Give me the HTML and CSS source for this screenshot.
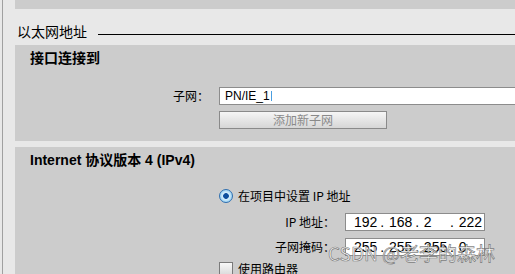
FILE: index.html
```html
<!DOCTYPE html>
<html lang="zh-CN">
<head>
  <meta charset="UTF-8" />
  <title>以太网地址</title>
  <link rel="stylesheet" href="styles.css">
</head>
<body>
  <div class="screen">
    <div class="rail"></div>
    <div class="content">
      <div class="strip"></div>
      <div class="sec-head">
        <span class="sec-title">以太网地址</span>
        <span class="sec-rule"></span>
      </div>

      <section class="panel panel-iface">
        <h2 class="panel-title">接口连接到</h2>
        <div class="row">
          <label class="lbl">子网：</label>
          <div class="field field-wide">PN/IE_1<span class="caret"></span></div>
        </div>
        <div class="btn-row">
          <button class="btn" disabled>添加新子网</button>
        </div>
      </section>

      <section class="panel panel-ip">
        <h2 class="panel-title">Internet 协议版本 4 (IPv4)</h2>
        <div class="opts">
          <div class="opt"><span class="radio"></span>在项目中设置 IP 地址</div>
          <div class="row row-ip">
            <label class="lbl">IP 地址：</label>
            <div class="field ip">
              <span class="oct">192</span><span class="dot">.</span>
              <span class="oct">168</span><span class="dot">.</span>
              <span class="oct">2</span><span class="dot">.</span>
              <span class="oct">222</span>
            </div>
          </div>
          <div class="row row-mask">
            <label class="lbl">子网掩码：</label>
            <div class="field ip">
              <span class="oct">255</span><span class="dot">.</span>
              <span class="oct">255</span><span class="dot">.</span>
              <span class="oct">255</span><span class="dot">.</span>
              <span class="oct">0</span>
            </div>
          </div>
          <div class="opt opt-check"><span class="check"></span>使用路由器</div>
        </div>
      </section>
    </div>
    <div class="watermark">CSDN @老李的森林</div>
  </div>
</body>
</html>
```

FILE: styles.css
```css
body {
  margin: 0;
  padding: 0;
  background: #e8e8e8;
  font-family: "Liberation Sans", "Noto Sans CJK SC", sans-serif;
  color: #000;
}
.screen {
  position: relative;
  width: 515px;
  height: 274px;
  overflow: hidden;
  display: flex;
}
.rail {
  width: 12px;
  margin-left: 2px;
  border-left: 1px solid #a0a0a0;
  flex: none;
}
.content {
  flex: 1;
  min-width: 0;
}
.strip {
  height: 9px;
  background: #cccccc;
}
.sec-head {
  height: 36px;
  display: flex;
  padding-left: 2px;
}
.sec-title {
  font-family: "Noto Sans CJK SC", sans-serif;
  font-size: 14px;
  line-height: 16px;
  margin-top: 14px;
  white-space: nowrap;
}
.sec-rule {
  flex: 1;
  height: 25px;
  margin-left: 11px;
  border-bottom: 1px solid #000;
}
.panel {
  background: #cccccc;
  padding: 3px 0 0 15px;
}
.panel-iface {
  height: 93px;
  margin-bottom: 6px;
}
.panel-ip {
  height: 130px;
}
.panel-title {
  margin: 0;
  font-size: 14px;
  line-height: 20px;
  font-weight: bold;
  white-space: nowrap;
}
.row {
  display: flex;
  align-items: center;
  gap: 10px;
  height: 18px;
}
.panel-iface .row {
  margin-top: 19px;
}
.lbl {
  font-family: "Noto Sans CJK SC", sans-serif;
  font-size: 12px;
  line-height: 14px;
  text-align: right;
  white-space: nowrap;
  flex: none;
}
.panel-iface .lbl {
  width: 179px;
}
.field {
  box-sizing: border-box;
  height: 18px;
  background: #fff;
  border: 1px solid #8c8c8c;
  font-size: 12px;
  line-height: 16px;
  display: flex;
  align-items: center;
  white-space: nowrap;
  flex: none;
}
.field-wide {
  width: 320px;
  padding-left: 5px;
}
.caret {
  display: inline-block;
  width: 1px;
  height: 10px;
  margin-left: 1px;
  background: #4a9ee0;
}
.btn-row {
  margin: 6px 0 0 189px;
}
.btn {
  box-sizing: border-box;
  width: 168px;
  height: 18px;
  padding: 0;
  border: 1px solid #8a8a8a;
  background: linear-gradient(#f6f6f6, #e4e4e4 55%, #d6d6d6);
  color: #8a8a8a;
  font-family: "Noto Sans CJK SC", sans-serif;
  font-size: 12px;
  line-height: 16px;
}
.opts {
  margin: 19px 0 0 189px;
}
.opt {
  display: flex;
  align-items: center;
  gap: 5px;
  height: 14px;
  font-family: "Noto Sans CJK SC", sans-serif;
  font-size: 12px;
  line-height: 14px;
  white-space: nowrap;
}
.radio {
  box-sizing: border-box;
  width: 14px;
  height: 14px;
  border-radius: 50%;
  border: 1px solid #2f6fb0;
  background: radial-gradient(circle, #0d4f9e 0 2.5px, #d8f0fc 3.2px, #9fd3f3 6px);
  flex: none;
}
.check {
  box-sizing: border-box;
  width: 14px;
  height: 14px;
  border: 1px solid #7a7a7a;
  background: linear-gradient(#f8f8f8, #dadada);
  flex: none;
}
.row-ip {
  margin-top: 10px;
}
.row-mask {
  margin-top: 7px;
}
.opt-check {
  margin-top: 6px;
}
.panel-ip .lbl {
  width: 116px;
}
.ip {
  width: 140px;
  padding-left: 8px;
  font-size: 14px;
}
.oct {
  width: 26px;
}
.dot {
  width: 10px;
  padding-left: 1px;
  box-sizing: border-box;
}
.watermark {
  position: absolute;
  left: 328px;
  top: 240px;
  font-family: "Noto Sans CJK SC", sans-serif;
  font-size: 19px;
  line-height: 26px;
  white-space: nowrap;
  color: rgba(255, 255, 255, 0.85);
  -webkit-text-stroke: 0.7px rgba(95, 95, 95, 0.8);
}
```
